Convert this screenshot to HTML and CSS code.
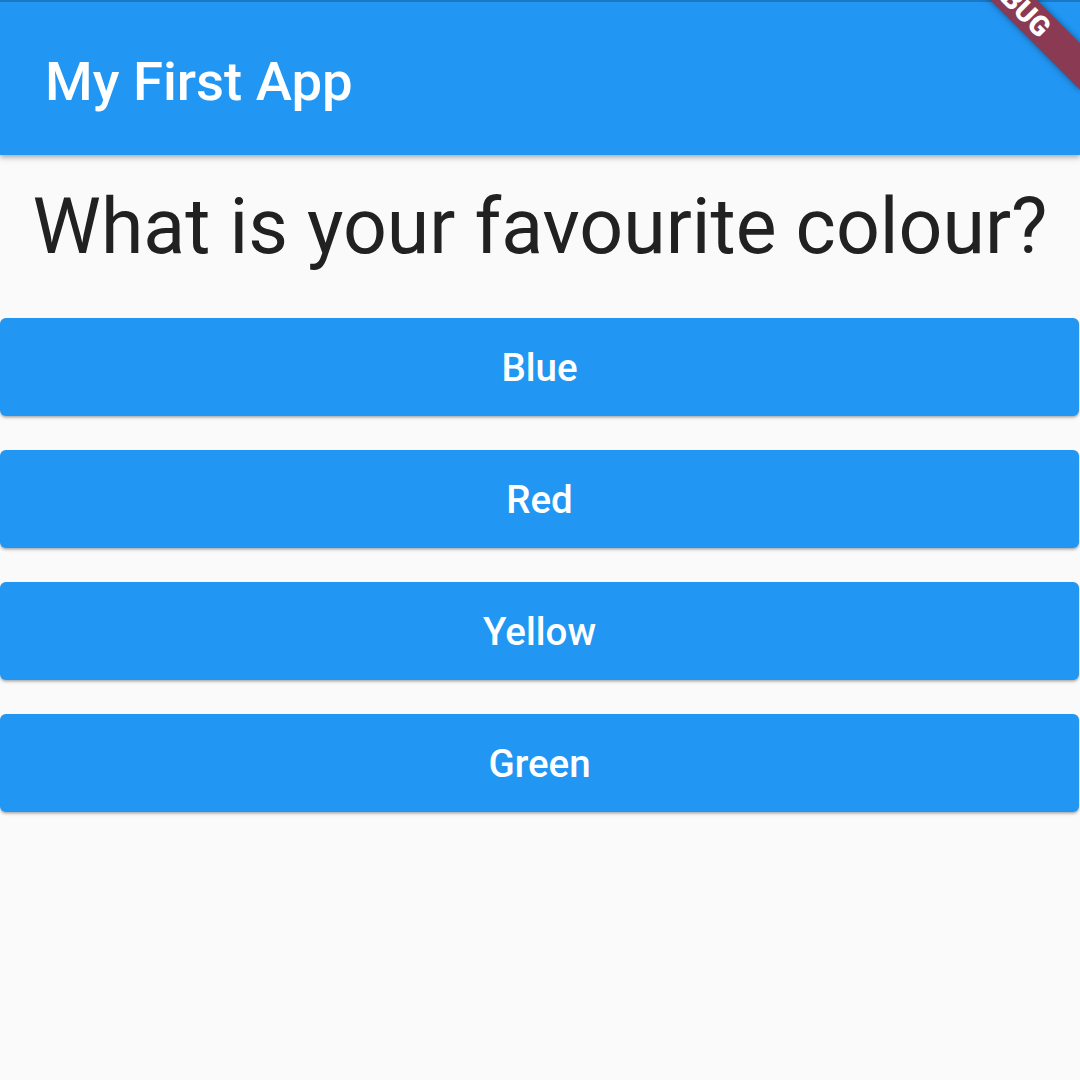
FILE: index.html
```html
<!DOCTYPE html>
<html>
<head>
<meta charset="utf-8">
<link rel="stylesheet" href="styles.css">
</head>
<body>
<div class="screen">
  <header class="app-bar">
    <h1 class="app-title">My First App</h1>
  </header>
  <main class="content">
    <p class="question">What is your favourite colour?</p>
    <div class="answers">
      <button class="answer">Blue</button>
      <button class="answer">Red</button>
      <button class="answer">Yellow</button>
      <button class="answer">Green</button>
    </div>
  </main>
  <div class="debug-banner"><span>DEBUG</span></div>
</div>
</body>
</html>
```

FILE: styles.css
```css
html, body {
  margin: 0;
  padding: 0;
  background: #fafafa;
}

.screen {
  position: relative;
  width: 1080px;
  height: 1080px;
  overflow: hidden;
  background: #fafafa;
  font-family: Roboto, "Noto Sans", sans-serif;
}

.app-bar {
  box-sizing: border-box;
  height: 155px;
  border-top: 2px solid #1b78c6;
  background: #2196f3;
  display: flex;
  align-items: center;
  padding: 5px 0 0 45px;
  box-shadow: 0 2px 4px rgba(0, 0, 0, 0.2), 0 4px 6px rgba(0, 0, 0, 0.12);
  position: relative;
  z-index: 1;
}

.app-title {
  margin: 0;
  color: #ffffff;
  font-size: 54.5px;
  font-weight: 500;
}

.content {
  display: flex;
  flex-direction: column;
}

.question {
  margin: 27px 0 0;
  text-align: center;
  font-size: 77px;
  line-height: 91px;
  font-weight: 400;
  color: #212121;
}

.answers {
  display: flex;
  flex-direction: column;
  gap: 34px;
  padding: 45px 1px 0 0;
}

.answer {
  height: 98px;
  border: none;
  border-radius: 6px;
  background: #2196f3;
  color: #ffffff;
  font-family: Roboto, "Noto Sans", sans-serif;
  font-size: 38.5px;
  font-weight: 500;
  padding: 0;
  box-shadow: 0 2px 3px rgba(0, 0, 0, 0.22), 0 1px 2px rgba(0, 0, 0, 0.12);
}

.debug-banner {
  position: absolute;
  left: 904px;
  top: -16.5px;
  width: 220px;
  height: 33px;
  transform: rotate(45deg);
  background: #8a3a52;
  box-shadow: 0 0 6px rgba(0, 0, 0, 0.4);
  display: flex;
  align-items: center;
  justify-content: center;
  z-index: 2;
}

.debug-banner span {
  color: #ffffff;
  font-family: Roboto, sans-serif;
  font-weight: 900;
  font-size: 28px;
  line-height: 28px;
}
```
